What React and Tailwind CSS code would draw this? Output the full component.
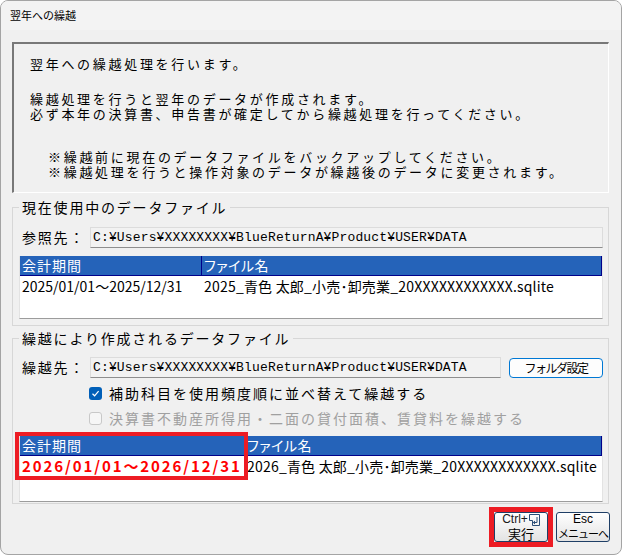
import React from "react";

const JP = "font-['Noto_Sans_CJK_JP',sans-serif]";
const MONO = "font-['Liberation_Mono','Noto_Sans_CJK_JP',monospace]";

function CheckRow({ checked, disabled, children }) {
  return (
    <div className="flex items-center h-[16px] ml-[70px]">
      {checked ? (
        <span className="w-[13px] h-[13px] rounded-[3px] bg-[#005fb8] flex items-center justify-center">
          <svg width="9" height="9" viewBox="0 0 9 9">
            <path d="M1.5 4.8 L3.6 6.8 L7.6 2.2" fill="none" stroke="white" strokeWidth="1.2" />
          </svg>
        </span>
      ) : (
        <span className="w-[13px] h-[13px] rounded-[3px] border border-[#c8c8c8] bg-[#f6f6f6]" />
      )}
      <span
        className={`ml-[7px] text-[14px] leading-[16px] tracking-[2px] ${
          disabled ? "text-[#a0a0a0]" : "text-black"
        }`}
      >
        {children}
      </span>
    </div>
  );
}

function PathRow({ label, children }) {
  return (
    <div className="flex items-center h-[21px]">
      <span className="w-[71px] pl-[3px] text-[14px] tracking-[1.8px]">{label}</span>
      <div
        className={`flex-1 h-full flex items-center pl-[2px] bg-[#f2f2f2] border border-[#dcdcdc] border-b-[#8e8e8e] ${MONO} text-[13px] tracking-[0.15px]`}
      >
        C:¥Users¥XXXXXXXX¥BlueReturnA¥Product¥USER¥DATA
      </div>
      {children}
    </div>
  );
}

function FileTable({ colWidth, height, period, file, highlight }) {
  return (
    <div
      className={`relative bg-white border-l border-r border-[#e3e3e3] border-b border-b-[#9c9c9c] ${height}`}
    >
      <div className="flex h-[20px] bg-[#2563b9] text-white border-b border-r border-[#00008a] text-[14px] leading-[19px] [font-feature-settings:'palt']">
        <div className={`${colWidth} border-r border-[#00008a] pl-[2px] tracking-[1px]`}>会計期間</div>
        <div className="flex-1 pl-[2px] tracking-[0.5px]">ファイル名</div>
      </div>
      <div className="flex h-[20px] items-center text-[14px] [font-feature-settings:'palt']">
        <div className={`${colWidth} pl-[2px] whitespace-nowrap`}>
          {highlight ? (
            <span className="text-[#ff0000] font-bold text-[15px] tracking-[1.9px]">{period}</span>
          ) : (
            period
          )}
        </div>
        <div className="flex-1 pl-[2px] whitespace-nowrap tracking-[0.2px]">{file}</div>
      </div>
      {highlight && (
        <span className="absolute left-[-5px] top-[-4px] w-[233px] h-[48px] border-4 border-[#ed1c24] pointer-events-none" />
      )}
    </div>
  );
}

function EnterKey() {
  return (
    <svg width="11" height="12" viewBox="0 0 11 12" className="ml-[1px]">
      <path d="M0.5 0.5 H10.5 V11.5 H3.5 V6.5 H0.5 Z" fill="none" stroke="#2b4e78" />
      <path d="M8 3 V8.5 H4.5" fill="none" stroke="#2b4e78" />
      <path d="M6 7 L4.3 8.5 L6 10" fill="none" stroke="#2b4e78" />
    </svg>
  );
}

export default function App() {
  return (
    <div className={`w-[622px] h-[555px] bg-white ${JP} text-black`}>
      <div className="w-full h-full rounded-[8px] border border-[#a4a4a4] bg-[#f0f0f0] overflow-hidden flex flex-col">
        <div className="h-[29px] shrink-0 bg-[#f3f3f3] flex items-center pl-[9px] text-[11px]">
          翌年への繰越
        </div>

        <div className="pl-[11px] pr-[12px]">
          {/* message */}
          <div className="mt-[12px] h-[151px] border-t-2 border-l-2 border-[#787878] border-r border-b border-r-white border-b-white pl-[16px] pt-[12px] text-[13px] leading-[15px] tracking-[2.7px]">
            <p>翌年への繰越処理を行います。</p>
            <p className="mt-[20px]">繰越処理を行うと翌年のデータが作成されます。</p>
            <p>必ず本年の決算書、申告書が確定してから繰越処理を行ってください。</p>
            <p className="mt-[28px] ml-[18px]">※繰越前に現在のデータファイルをバックアップしてください。</p>
            <p className="ml-[18px]">※繰越処理を行うと操作対象のデータが繰越後のデータに変更されます。</p>
          </div>

          {/* current file */}
          <fieldset className="mt-[6px] h-[127px] border border-[#d7d7d7] pl-[6px] pr-[5px]">
            <legend className="px-[3px] text-[14px] leading-[16px] tracking-[1.8px]">
              現在使用中のデータファイル
            </legend>
            <div className="mt-[12px]">
              <PathRow label="参照先：" />
            </div>
            <div className="mt-[8px]">
              <FileTable
                colWidth="w-[182px]"
                height="h-[63px]"
                period="2025/01/01～2025/12/31"
                file="2025_青色 太郎_小売･卸売業_20XXXXXXXXXXXX.sqlite"
              />
            </div>
          </fieldset>

          {/* new file */}
          <fieldset className="mt-[4px] h-[174px] border border-[#d7d7d7] pl-[6px] pr-[5px]">
            <legend className="px-[3px] text-[14px] leading-[16px] tracking-[1.8px]">
              繰越により作成されるデータファイル
            </legend>
            <div className="mt-[11px]">
              <PathRow label="繰越先：">
                <button className="ml-[8px] w-[94px] h-[20px] rounded-[4px] border border-[#0078d4] bg-[#fdfdfd] text-[12px] tracking-[-1.5px] flex items-center justify-center">
                  フォルダ設定
                </button>
              </PathRow>
            </div>
            <div className="mt-[7px]">
              <CheckRow checked>補助科目を使用頻度順に並べ替えて繰越する</CheckRow>
            </div>
            <div className="mt-[9px]">
              <CheckRow disabled>決算書不動産所得用・二面の貸付面積、賃貸料を繰越する</CheckRow>
            </div>
            <div className="mt-[10px]">
              <FileTable
                colWidth="w-[225px]"
                height="h-[66px]"
                period="2026/01/01～2026/12/31"
                file="2026_青色 太郎_小売･卸売業_20XXXXXXXXXXXX.sqlite"
                highlight
              />
            </div>
          </fieldset>

          {/* buttons */}
          <div className="mt-[3px] flex items-center justify-end gap-[3px] -mr-[1px]">
            <div className="border-[5px] border-[#ed1c24]">
              <button className="w-[54px] h-[30px] rounded-[3px] border border-[#1f3f66] bg-gradient-to-b from-white to-[#e3e3e3] flex flex-col items-center justify-center">
                <span className="flex items-center h-[13px] leading-[13px] text-[12px] font-['Liberation_Sans',sans-serif] text-[#1a1a1a]">
                  Ctrl+
                  <EnterKey />
                </span>
                <span className="h-[15px] leading-[15px] text-[13px]">実行</span>
              </button>
            </div>
            <button className="w-[54px] h-[30px] rounded-[3px] border border-[#1f3f66] bg-gradient-to-b from-white to-[#e3e3e3] flex flex-col items-center justify-center">
              <span className="h-[13px] leading-[13px] text-[12px] font-['Liberation_Sans',sans-serif]">Esc</span>
              <span className="h-[15px] leading-[15px] text-[11px] tracking-[-1px] whitespace-nowrap">メニューへ</span>
            </button>
          </div>
        </div>
      </div>
    </div>
  );
}
